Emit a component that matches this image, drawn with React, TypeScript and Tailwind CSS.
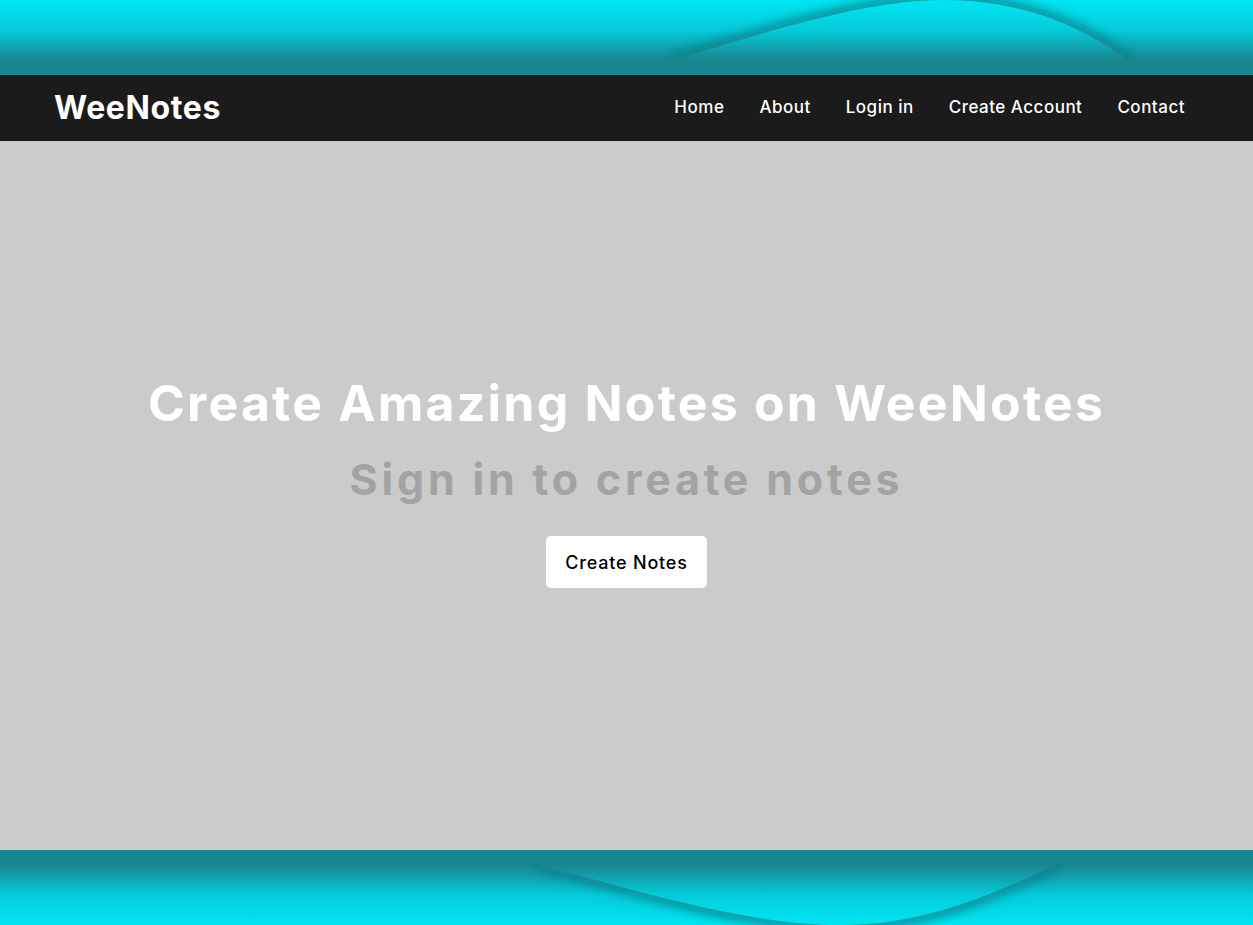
import React from 'react';

const font = { fontFamily: '"Inter", "Noto Sans", sans-serif' };

const TopWave: React.FC = () => (
  <svg className="absolute inset-0 h-full w-full" viewBox="0 0 1253 75" preserveAspectRatio="none">
    <defs>
      <linearGradient id="tg" x1="0" y1="0" x2="0" y2="75" gradientUnits="userSpaceOnUse">
        <stop offset="0" stopColor="#00e6f3" />
        <stop offset="0.4" stopColor="#05cbdb" />
        <stop offset="0.8" stopColor="#178690" />
        <stop offset="1" stopColor="#178690" />
      </linearGradient>
      <filter id="tblur" x="-20%" y="-100%" width="140%" height="300%">
        <feGaussianBlur stdDeviation="6" />
      </filter>
    </defs>
    <rect width="1253" height="75" fill="url(#tg)" />
    <path
      d="M673 60 C760 35 860 0 943 0 C1020 0 1080 25 1128 60"
      fill="none"
      stroke="#0a7d87"
      strokeWidth="10"
      filter="url(#tblur)"
    />
    <path d="M673 60 C760 35 860 0 943 0 C1020 0 1080 25 1128 60 L1128 75 L673 75 Z" fill="url(#tg)" />
    <rect y="60" width="1253" height="15" fill="#178690" />
  </svg>
);

const BottomWave: React.FC = () => (
  <svg className="absolute inset-0 h-full w-full" viewBox="0 0 1253 75" preserveAspectRatio="none">
    <defs>
      <linearGradient id="bg" x1="0" y1="0" x2="0" y2="75" gradientUnits="userSpaceOnUse">
        <stop offset="0" stopColor="#178690" />
        <stop offset="0.2" stopColor="#178690" />
        <stop offset="0.6" stopColor="#05cbdb" />
        <stop offset="1" stopColor="#00e6f3" />
      </linearGradient>
      <filter id="bblur" x="-20%" y="-100%" width="140%" height="300%">
        <feGaussianBlur stdDeviation="6" />
      </filter>
    </defs>
    <rect width="1253" height="75" fill="url(#bg)" />
    <path
      d="M535 14 C620 35 740 75 840 75 C930 75 1000 40 1058 14"
      fill="none"
      stroke="#0a7d87"
      strokeWidth="10"
      filter="url(#bblur)"
    />
    <path d="M535 14 C620 35 740 75 840 75 C930 75 1000 40 1058 14 L1058 0 L535 0 Z" fill="url(#bg)" />
    <rect width="1253" height="14" fill="#178690" />
  </svg>
);

export default function App() {
  return (
    <div className="flex h-[925px] w-full flex-col bg-[#cbcbcb]" style={font}>
      <div className="relative h-[75px] shrink-0">
        <TopWave />
      </div>
      <nav className="flex h-[66px] shrink-0 items-center justify-between bg-[#1b1b1b] pl-[54px] pr-[68px]">
        <span className="text-[32px] font-bold tracking-[0.6px] text-white">WeeNotes</span>
        <ul className="flex items-center gap-[35px] text-[17px] font-medium tracking-[0.5px] text-white">
          <li>Home</li>
          <li>About</li>
          <li>Login in</li>
          <li>Create Account</li>
          <li>Contact</li>
        </ul>
      </nav>
      <main className="flex flex-1 flex-col items-center pt-[232px]">
        <h1 className="text-[50px] font-bold leading-[60px] tracking-[2.2px] text-white">
          Create Amazing Notes on WeeNotes
        </h1>
        <h2 className="mt-[18px] text-[43px] font-bold leading-[56px] tracking-[3.8px] text-[#a3a3a3]">
          Sign in to create notes
        </h2>
        <button className="mt-[29px] h-[52px] w-[161px] rounded-[5px] bg-white text-[18px] font-medium tracking-[0.8px] text-black">
          Create Notes
        </button>
      </main>
      <div className="relative h-[75px] shrink-0">
        <BottomWave />
      </div>
    </div>
  );
}
